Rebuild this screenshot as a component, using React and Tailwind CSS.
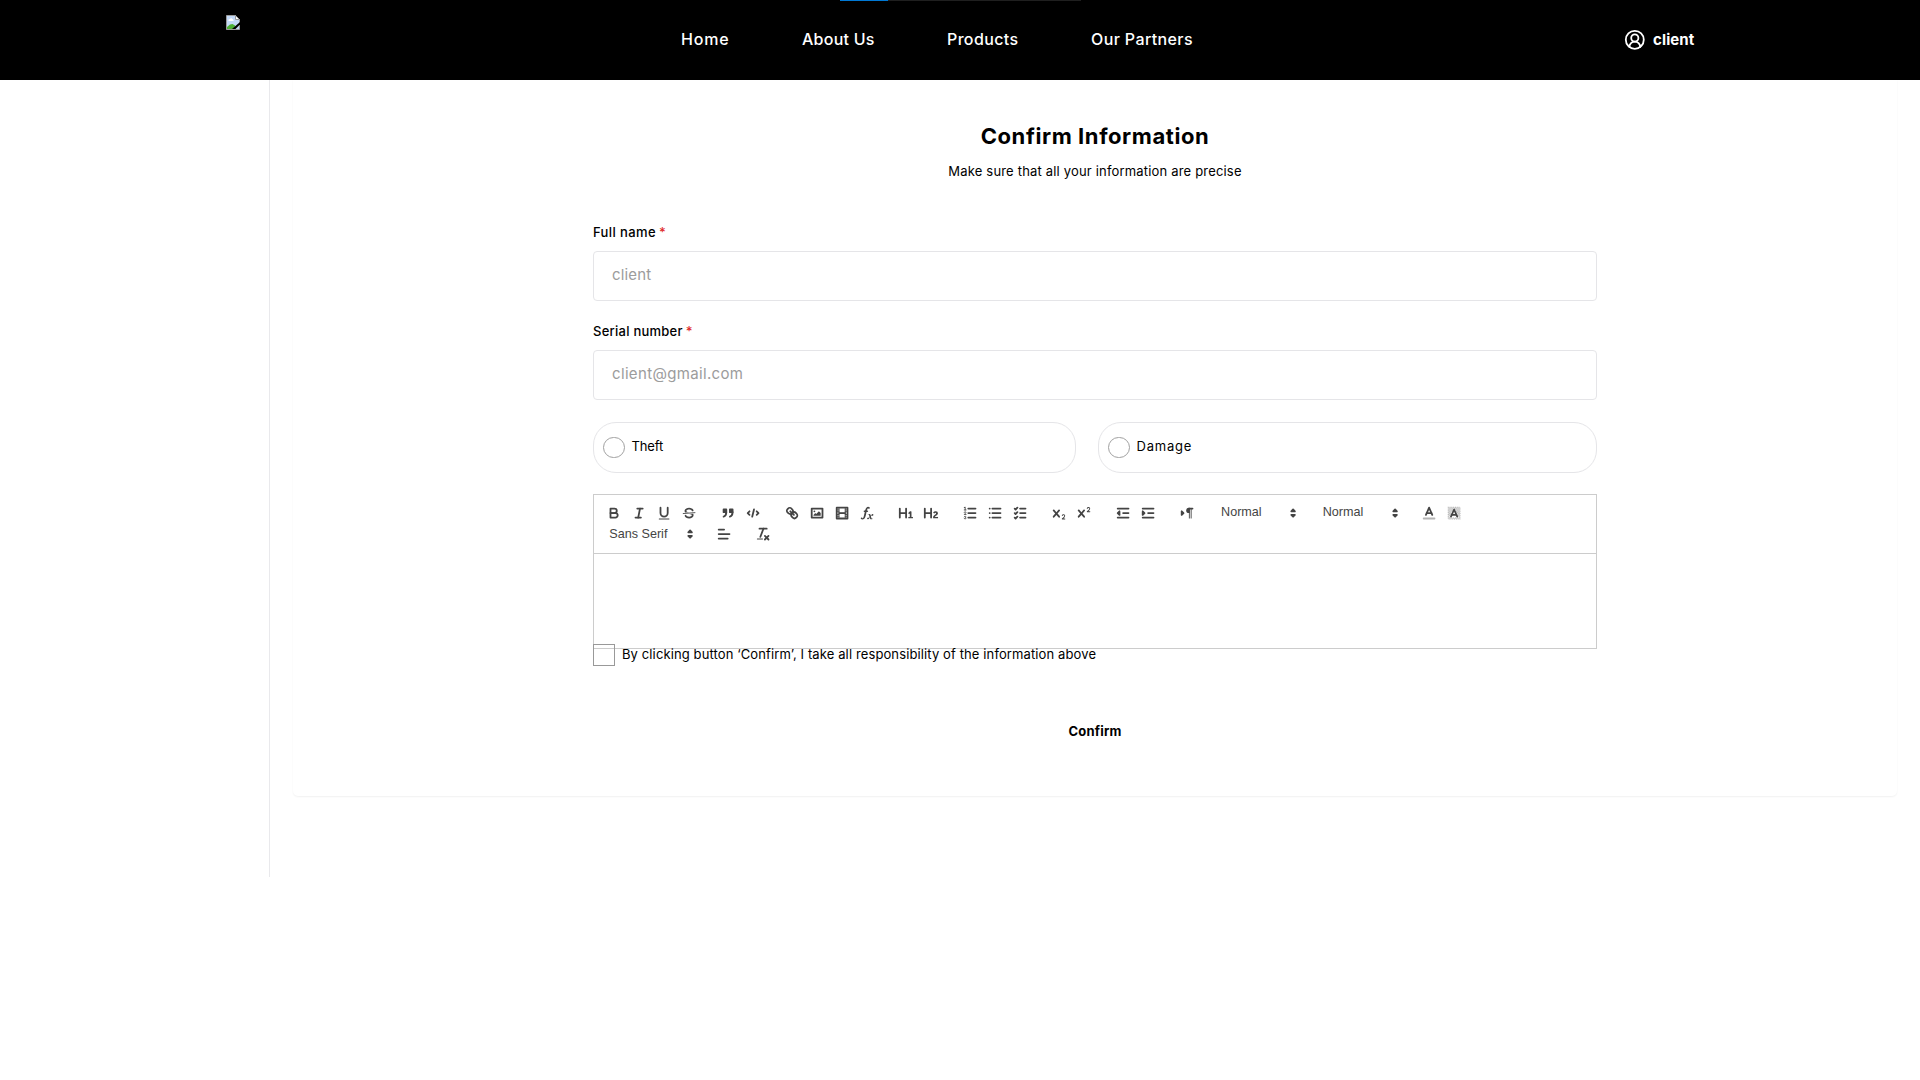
import { CircleUserRound } from "lucide-react";

const NAV = [
  { label: "Home", cls: "w-[48px] tracking-[0.8px]" },
  { label: "About Us", cls: "w-[72px] tracking-[0.25px]" },
  { label: "Products", cls: "w-[71px] tracking-[0.36px]" },
  { label: "Our Partners", cls: "w-[102px] tracking-[0.38px]" },
];

/* ---------- toolbar glyph helpers, 18 unit grid ---------- */

const S = { fill: "none", stroke: "#444", strokeWidth: 2, strokeLinecap: "round", strokeLinejoin: "round" };
const THIN = { ...S, strokeWidth: 1 };
const F = { fill: "#444", stroke: "none" };
const FS = { ...S, fill: "#444" };

function L({ d, ...rest }) {
  const [x1, y1, x2, y2] = d;
  return <line x1={x1} y1={y1} x2={x2} y2={y2} {...S} {...rest} />;
}

const CROSS =
  "M9.65,5.241a1,1,0,0,0-1.409.108L6,7.964,3.759,5.349A1,1,0,0,0,2.192,6.59178Q2.21541,6.6213,2.241,6.649L4.684,9.5,2.241,12.35A1,1,0,0,0,3.71,13.70722q0.02557-.02768.049-0.05722L6,11.036,8.241,13.65a1,1,0,1,0,1.567-1.24277Q9.78459,12.3777,9.759,12.35L7.316,9.5,9.759,6.651A1,1,0,0,0,9.65,5.241Z";

const CHECKER = [];
for (let y = 2; y < 16; y++) {
  for (let x = 2; x < 16; x++) {
    const inLetter = y > 3 && y < 14 && Math.abs(x + 0.5 - 9) < (y - 2) * 0.5;
    if ((x + y) % 2 === 0 && !inLetter) CHECKER.push([x, y]);
  }
}

const ICONS = {
  bold: (
    <>
      <path {...S} d="M5,4H9.5A2.5,2.5,0,0,1,12,6.5v0A2.5,2.5,0,0,1,9.5,9H5V4Z" />
      <path {...S} d="M5,9h5.5A2.5,2.5,0,0,1,13,11.5v0A2.5,2.5,0,0,1,10.5,14H5V9Z" />
    </>
  ),
  italic: (
    <>
      <L d={[7, 4, 13, 4]} />
      <L d={[5, 14, 11, 14]} />
      <L d={[8, 14, 10, 4]} />
    </>
  ),
  underline: (
    <>
      <path {...S} d="M5,3V9a4.012,4.012,0,0,0,4,4H9a4.012,4.012,0,0,0,4-4V3" />
      <rect {...F} x="3" y="15" width="12" height="1" rx="0.5" />
    </>
  ),
  strike: (
    <>
      <line {...THIN} x1="15.5" x2="2.5" y1="8.5" y2="9.5" />
      <path {...F} d="M9.007,8C6.542,7.791,6,7.519,6,6.5,6,5.792,7.283,5,9,5c1.571,0,2.765.679,2.969,1.309a1,1,0,0,0,1.9-.617C13.356,4.106,11.354,3,9,3,6.2,3,4,4.538,4,6.5a3.2,3.2,0,0,0,.5,1.843Z" />
      <path {...F} d="M8.984,10C11.457,10.208,12,10.479,12,11.5c0,0.708-1.283,1.5-3,1.5-1.571,0-2.765-.679-2.969-1.309a1,1,0,1,0-1.9.617C4.644,13.894,6.646,15,9,15c2.8,0,5-1.538,5-3.5a3.2,3.2,0,0,0-.5-1.843Z" />
    </>
  ),
  quote: (
    <>
      <rect {...FS} x="4" y="5" width="3" height="3" />
      <rect {...FS} x="11" y="5" width="3" height="3" />
      <path {...FS} d="M7,8c0,4.031-3,5-3,5" />
      <path {...FS} d="M14,8c0,4.031-3,5-3,5" />
    </>
  ),
  code: (
    <>
      <polyline {...S} points="5 7 3 9 5 11" />
      <polyline {...S} points="13 7 15 9 13 11" />
      <L d={[10, 5, 8, 13]} />
    </>
  ),
  link: (
    <>
      <L d={[7, 7, 11, 11]} />
      <path {...S} d="M8.9,4.577a3.476,3.476,0,0,1,.36,4.679A3.476,3.476,0,0,1,4.577,8.9C3.185,7.5,2.035,6.4,4.217,4.217S7.5,3.185,8.9,4.577Z" />
      <path {...S} d="M13.423,9.1a3.476,3.476,0,0,0-4.679-.36,3.476,3.476,0,0,0,.36,4.679c1.392,1.392,2.5,2.542,4.679.36S14.815,10.5,13.423,9.1Z" />
    </>
  ),
  image: (
    <>
      <rect {...S} x="3" y="4" width="12" height="10" />
      <circle {...F} cx="6" cy="7" r="1" />
      <polyline {...F} points="5 12 5 11 7 9 8 10 11 7 13 9 13 12 5 12" />
    </>
  ),
  video: (
    <>
      <rect {...S} x="3" y="3" width="12" height="12" />
      <rect {...F} x="5" y="3" width="1" height="12" />
      <rect {...F} x="12" y="3" width="1" height="12" />
      <rect {...F} x="5" y="8" width="8" height="2" />
      {[5, 7, 10, 12].map((y) => (
        <g key={y}>
          <rect {...F} x="3" y={y} width="3" height="1" />
          <rect {...F} x="12" y={y} width="3" height="1" />
        </g>
      ))}
    </>
  ),
  formula: (
    <>
      <path {...F} d="M11.759,2.482a2.561,2.561,0,0,0-3.53.607A7.656,7.656,0,0,0,6.8,6.2C6.109,9.188,5.275,14.677,4.15,14.927a1.545,1.545,0,0,0-1.3-.933A0.922,0.922,0,0,0,2,15.036S1.954,16,4.119,16s3.091-2.691,3.7-5.553c0.177-.826.36-1.726,0.554-2.6L8.775,6.2c0.381-1.421.807-2.521,1.306-2.676a1.014,1.014,0,0,0,1.02.56A0.966,0.966,0,0,0,11.759,2.482Z" />
      <rect {...F} x="5.15" y="6.2" width="5" height="1.6" rx="0.8" />
      <path {...F} d="M13.663,12.027a1.662,1.662,0,0,1,.266-0.276q0.193,0.069.456,0.138a2.1,2.1,0,0,0,.535.069,1.075,1.075,0,0,0,.767-0.3,1.044,1.044,0,0,0,.314-0.8,0.84,0.84,0,0,0-.238-0.619,0.8,0.8,0,0,0-.594-0.239,1.154,1.154,0,0,0-.781.3,4.607,4.607,0,0,0-.781,1q-0.091.15-.218,0.346l-0.246.38c-0.068-.288-0.137-0.582-0.212-0.885-0.459-1.847-2.494-.984-2.941-0.8-0.482.2-.353,0.647-0.094,0.529a0.869,0.869,0,0,1,1.281.585c0.217,0.751.377,1.436,0.527,2.038a5.688,5.688,0,0,1-.362.467,2.69,2.69,0,0,1-.264.271q-0.221-.08-0.471-0.147a2.029,2.029,0,0,0-.522-0.066,1.079,1.079,0,0,0-.768.3A1.058,1.058,0,0,0,9,15.131a0.82,0.82,0,0,0,.832.852,1.134,1.134,0,0,0,.787-0.3,5.11,5.11,0,0,0,.776-0.993q0.141-.219.215-0.34c0.046-.076.122-0.194,0.223-0.346a2.786,2.786,0,0,0,.918,1.726,2.582,2.582,0,0,0,2.376-.185c0.317-.181.212-0.565,0-0.494A0.807,0.807,0,0,1,14.176,15a5.159,5.159,0,0,1-.913-2.446l0,0Q13.487,12.24,13.663,12.027Z" />
    </>
  ),
  h1: (
    <path {...F} d="M10,4V14a1,1,0,0,1-2,0V10H3v4a1,1,0,0,1-2,0V4A1,1,0,0,1,3,4V8H8V4a1,1,0,0,1,2,0Zm6.06787,9.209H14.98975V7.59863a.54085.54085,0,0,0-.605-.60547h-.62744a1.01119,1.01119,0,0,0-.748.29688L11.645,8.56641a.5435.5435,0,0,0-.022.8584l.28613.30762a.53861.53861,0,0,0,.84717.0332l.09912-.08789a1.2137,1.2137,0,0,0,.2417-.35254h.02246s-.01123.30859-.01123.60547V13.209H12.041a.54085.54085,0,0,0-.605.60547v.43945a.54085.54085,0,0,0,.605.60547h4.02686a.54085.54085,0,0,0,.605-.60547v-.43945A.54085.54085,0,0,0,16.06787,13.209Z" />
  ),
  h2: (
    <path {...F} d="M16.73975,13.81445v.43945a.54085.54085,0,0,1-.605.60547H11.855a.58392.58392,0,0,1-.64893-.60547V14.0127c0-2.90527,3.39941-3.42187,3.39941-4.55469a.77675.77675,0,0,0-.84717-.78125,1.17684,1.17684,0,0,0-.83594.38477c-.2749.26367-.561.374-.85791.13184l-.4292-.34082c-.30811-.24219-.38525-.51758-.1543-.81445a2.97155,2.97155,0,0,1,2.45361-1.17676,2.45393,2.45393,0,0,1,2.68408,2.40918c0,2.45312-3.1792,2.92676-3.27832,3.93848h2.79443A.54085.54085,0,0,1,16.73975,13.81445ZM9,3A.99974.99974,0,0,0,8,4V8H3V4A1,1,0,0,0,1,4V14a1,1,0,0,0,2,0V10H8v4a1,1,0,0,0,2,0V4A.99974.99974,0,0,0,9,3Z" />
  ),
  ordered: (
    <>
      <L d={[7, 4, 15, 4]} />
      <L d={[7, 9, 15, 9]} />
      <L d={[7, 14, 15, 14]} />
      <line {...THIN} x1="2.5" x2="4.5" y1="5.5" y2="5.5" />
      <path {...F} d="M3.5,6A0.5,0.5,0,0,1,3,5.5V3.085l-0.276.138A0.5,0.5,0,0,1,2.053,3c-0.124-.247-0.023-0.324.224-0.447l1-.5A0.5,0.5,0,0,1,4,2.5v3A0.5,0.5,0,0,1,3.5,6Z" />
      <path {...THIN} d="M4.5,10.5h-2c0-.234,1.85-1.076,1.85-2.234A0.959,0.959,0,0,0,2.5,8.156" />
      <path {...THIN} d="M2.5,14.846a0.959,0.959,0,0,0,1.85-.109A0.7,0.7,0,0,0,3.75,14a0.688,0.688,0,0,0,.6-0.736,0.959,0.959,0,0,0-1.85-.109" />
    </>
  ),
  bullet: (
    <>
      {[4, 9, 14].map((y) => (
        <g key={y}>
          <L d={[6, y, 15, y]} />
          <L d={[3, y, 3, y]} />
        </g>
      ))}
    </>
  ),
  check: (
    <>
      {[4, 9, 14].map((y) => (
        <g key={y}>
          <L d={[9, y, 15, y]} />
          <polyline {...S} points={`3 ${y} 4 ${y + 1} 6 ${y - 1}`} />
        </g>
      ))}
    </>
  ),
  sub: (
    <>
      <path {...F} d="M15.5,15H13.861a3.858,3.858,0,0,0,1.914-2.975,1.8,1.8,0,0,0-1.6-1.751A1.921,1.921,0,0,0,12.021,11.7a0.50013,0.50013,0,1,0,.957.291h0a0.914,0.914,0,0,1,1.053-.725,0.81,0.81,0,0,1,.744.762c0,1.076-1.16971,1.86982-1.93971,2.43082A1.45639,1.45639,0,0,0,12,15.5a0.5,0.5,0,0,0,.5.5h3A0.5,0.5,0,0,0,15.5,15Z" />
      <path {...F} d={CROSS} />
    </>
  ),
  sup: (
    <>
      <path {...F} d="M15.5,7H13.861a4.015,4.015,0,0,0,1.914-2.975,1.8,1.8,0,0,0-1.6-1.751A1.922,1.922,0,0,0,12.021,3.7a0.5,0.5,0,1,0,.957.291,0.917,0.917,0,0,1,1.053-.725,0.81,0.81,0,0,1,.744.762c0,1.077-1.164,1.925-1.934,2.486A1.423,1.423,0,0,0,12,7.5a0.5,0.5,0,0,0,.5.5h3A0.5,0.5,0,0,0,15.5,7Z" />
      <path {...F} d={CROSS} />
    </>
  ),
  outdent: (
    <>
      <L d={[3, 14, 15, 14]} />
      <L d={[3, 4, 15, 4]} />
      <L d={[9, 9, 15, 9]} />
      <polyline {...S} points="5 7 5 11 3 9 5 7" />
    </>
  ),
  indent: (
    <>
      <L d={[3, 14, 15, 14]} />
      <L d={[3, 4, 15, 4]} />
      <L d={[9, 9, 15, 9]} />
      <polyline {...FS} points="3 7 3 11 5 9 3 7" />
    </>
  ),
  direction: (
    <>
      <polygon {...FS} points="3 11 5 9 3 7 3 11" />
      <L d={[15, 4, 11, 4]} />
      <path {...F} d="M11,3a3,3,0,0,0,0,6h1V3H11Z" />
      <rect {...F} x="11" y="4" width="1" height="11" />
      <rect {...F} x="13" y="4" width="1" height="11" />
    </>
  ),
  color: (
    <>
      <L d={[3, 15, 15, 15]} opacity="0.4" />
      <polyline {...S} points="5.5 11 9 3 12.5 11" />
      <L d={[11.63, 9, 6.38, 9]} />
    </>
  ),
  background: (
    <>
      <g opacity="0.55">
        {CHECKER.map(([x, y]) => (
          <rect key={`${x}-${y}`} {...F} x={x} y={y} width="1" height="1" />
        ))}
      </g>
      <polyline {...S} points="5.5 13 9 5 12.5 13" />
      <L d={[11.63, 11, 6.38, 11]} />
    </>
  ),
  align: (
    <>
      <L d={[3, 9, 15, 9]} />
      <L d={[3, 14, 13, 14]} />
      <L d={[3, 4, 9, 4]} />
    </>
  ),
  clean: (
    <>
      <L d={[5, 3, 13, 3]} />
      <L d={[6, 12, 9.35, 3]} />
      <L d={[11, 11, 15, 15]} />
      <L d={[15, 11, 11, 15]} />
      <rect {...F} x="2" y="14" width="7" height="1" rx="0.5" />
    </>
  ),
};

function ToolButton({ name }) {
  return (
    <button type="button" className="flex h-[21.6px] w-[25.2px] items-center justify-center">
      <svg viewBox="0 0 18 18" className="h-[16.2px] w-[16.2px]">
        {ICONS[name]}
      </svg>
    </button>
  );
}

function Group({ items }) {
  return (
    <div className="flex">
      {items.map((n) => (
        <ToolButton key={n} name={n} />
      ))}
    </div>
  );
}

function Picker({ label, wide }) {
  return (
    <div
      className={`flex h-[21.6px] items-center justify-between pl-[8.1px] font-['Liberation_Sans',Arial,sans-serif] text-[12.6px] font-medium text-[#444] ${
        wide ? "w-[97.2px]" : "w-[88.2px]"
      }`}
    >
      <span className="-mt-px">{label}</span>
      <svg viewBox="0 0 18 18" className="h-[16.2px] w-[16.2px]">
        <polygon {...S} points="7 11 9 13 11 11 7 11" />
        <polygon {...S} points="7 7 9 5 11 7 7 7" />
      </svg>
    </div>
  );
}

function BrokenImage() {
  return (
    <svg viewBox="0 0 14 15" className="mt-[15px] h-[15px] w-[14px] self-start">
      <path d="M0.5 0.5H9.5L13.5 4.5V14.5H0.5Z" fill="#c3d9f7" stroke="#9a9a9a" />
      <path d="M9.5 0.5V4.5H13.5Z" fill="#fff" stroke="#9a9a9a" />
      <path d="M2.5 6V4.5L4 4L5 3L6.5 4L7.5 5V6Z" fill="#fff" />
      <path d="M1 14V12L4 9.5L6.5 9L9 10.5V14Z" fill="#4caf35" />
      <path d="M6 14L14 7V9.5L9.5 14Z" fill="#000" />
    </svg>
  );
}

function Field({ label, labelCls, value, valueCls }) {
  return (
    <label className="flex flex-col">
      <span className="flex h-[19px] items-center gap-[3px] pt-[2px] text-[13px] font-medium">
        <span className={labelCls}>{label}</span>
        <span className="text-[#e02b2b]">*</span>
      </span>
      <span className="mt-[10px] flex h-[50px] items-center rounded-[4px] border border-[#e5e5e8] px-[18px] pb-[2px] text-[15px] text-[#9c9c9c]">
        <span className={valueCls}>{value}</span>
      </span>
    </label>
  );
}

function Choice({ label, cls, textCls }) {
  return (
    <label className={`flex h-[51px] items-center rounded-[23px] border border-[#e5e5e8] pl-[9px] ${cls}`}>
      <span className="h-[21.5px] w-[21.5px] rounded-full border border-[#a0a0a0]" />
      <span className={`ml-[7px] -mt-[2px] text-[13px] ${textCls}`}>{label}</span>
    </label>
  );
}

export default function App() {
  return (
    <div className="min-h-[1080px] bg-white font-['Inter',sans-serif] text-black">
      <header className="relative flex h-[80px] items-center bg-black px-[226px] text-white">
        <div className="absolute left-[840px] top-0 flex h-px w-[241px] bg-[#1f1f1f]">
          <div className="w-[48px] bg-[#0078d4]" />
        </div>
        <div className="flex h-full w-[455px]">
          <BrokenImage />
        </div>
        <nav className="flex gap-[73px] pb-[2px] text-[16px] font-medium">
          {NAV.map((n) => (
            <a key={n.label} className={`whitespace-nowrap ${n.cls}`}>
              {n.label}
            </a>
          ))}
        </nav>
        <div className="ml-auto flex items-center gap-[7px]">
          <CircleUserRound size={21.6} strokeWidth={2} />
          <span className="w-[41px] text-[15px] font-bold tracking-[0.12px]">client</span>
        </div>
      </header>

      <div className="flex h-[797px]">
        <aside className="w-[270px] shrink-0 border-r border-[#e9e9ec]" />
        <main className="flex-1 pl-[23px] pr-[23px]">
          <section className="flex h-[716px] flex-col items-center rounded-b-[5px] pt-[40px] shadow-[0_1px_2px_rgba(0,0,0,0.06)]">
            <h1 className="h-[32px] text-[22px] leading-[32px] font-bold tracking-[0.58px]">Confirm Information</h1>
            <p className="mt-[9px] h-[21px] text-[13px] leading-[20px] tracking-[0.18px]">
              Make sure that all your information are precise
            </p>

            <form className="mt-[40px] flex w-[1004px] flex-col">
              <Field label="Full name" labelCls="tracking-[0.4px]" value="client" valueCls="tracking-[0.16px]" />
              <div className="mt-[20px]">
                <Field
                  label="Serial number"
                  labelCls="tracking-[0.25px]"
                  value="client@gmail.com"
                  valueCls="tracking-[0.34px]"
                />
              </div>

              <div className="mt-[22px] flex gap-[22px]">
                <Choice label="Theft" cls="w-[483px]" textCls="tracking-[-0.15px]" />
                <Choice label="Damage" cls="flex-1" textCls="tracking-[0.8px]" />
              </div>

              <div className="mt-[21px] flex h-[155px] flex-col border border-[#ccc]">
                <div className="flex h-[59px] flex-col border-b border-[#ccc] px-[7.2px] pt-[7.2px]">
                  <div className="flex gap-[13.5px]">
                    <Group items={["bold", "italic", "underline", "strike"]} />
                    <Group items={["quote", "code"]} />
                    <Group items={["link", "image", "video", "formula"]} />
                    <Group items={["h1", "h2"]} />
                    <Group items={["ordered", "bullet", "check"]} />
                    <Group items={["sub", "sup"]} />
                    <Group items={["outdent", "indent"]} />
                    <Group items={["direction"]} />
                    <Picker label="Normal" />
                    <Picker label="Normal" />
                    <Group items={["color", "background"]} />
                  </div>
                  <div className="flex gap-[13.5px]">
                    <Picker label="Sans Serif" wide />
                    <Group items={["align"]} />
                    <Group items={["clean"]} />
                  </div>
                </div>
              </div>

              <label className="-mt-[5px] flex h-[22px] items-center">
                <span className="h-[22px] w-[22px] border border-[#999]" />
                <span className="ml-[7px] text-[13px] tracking-[0.115px]">
                  By clicking button ‘Confirm’, I take all responsibility of the information above
                </span>
              </label>

              <button type="button" className="mt-[55px] h-[20px] self-center text-[13px] leading-[20px] font-bold tracking-[0.2px]">
                Confirm
              </button>
            </form>
          </section>
        </main>
      </div>
    </div>
  );
}
